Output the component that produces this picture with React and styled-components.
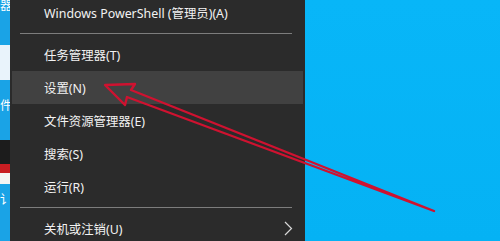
import styled, { createGlobalStyle } from "styled-components";

const GlobalStyle = createGlobalStyle`
  html, body {
    margin: 0;
    padding: 0;
    background: #06b4f6;
  }
  body {
    font-family: "Noto Sans", "Noto Sans CJK SC", sans-serif;
  }
`;

const items = [
  { label: "Windows PowerShell (管理员)(A)" },
  { sep: true },
  { label: "任务管理器(T)" },
  { label: "设置(N)", active: true },
  { label: "文件资源管理器(E)" },
  { label: "搜索(S)" },
  { label: "运行(R)" },
  { sep: true },
  { label: "关机或注销(U)", sub: true },
];

export default function App() {
  return (
    <>
      <GlobalStyle />
      <Screen>
        <DesktopStrip>
          <IconLabel>器</IconLabel>
          <IconArt $tone="#e9f3fb" $top={33} $h={35} $bottom={20} />
          <IconLabel>件</IconLabel>
          <IconArt $tone="#c81d22" $top={28} $h={44} $bottom={10} $dark />
          <IconLabel>待讠</IconLabel>
        </DesktopStrip>
        <Menu>
          {items.map((it, i) =>
            it.sep ? (
              <Separator key={i} />
            ) : (
              <Row key={i} $active={it.active}>
                <span>{it.label}</span>
                {it.sub && (
                  <svg width="9" height="15" viewBox="0 0 9 15">
                    <path d="M1 1 L7.5 7.5 L1 14" fill="none" stroke="#d8d8d8" strokeWidth="1.2" />
                  </svg>
                )}
              </Row>
            )
          )}
        </Menu>
        <Desktop />
        <Arrow width="500" height="241" viewBox="0 0 500 241">
          <path
            d="M105 85 L135 84 L131 90 L434 211 L127 97 L125 105 Z"
            fill="none"
            stroke="#cf1230"
            strokeWidth="2.4"
            strokeLinejoin="round"
          />
        </Arrow>
      </Screen>
    </>
  );
}

const Screen = styled.div`
  position: relative;
  width: 500px;
  height: 241px;
  overflow: hidden;
  display: flex;
`;

const DesktopStrip = styled.div`
  width: 10px;
  flex-shrink: 0;
  background: #1aa3e6;
  display: flex;
  flex-direction: column;
  align-items: flex-end;
  overflow: hidden;
`;

const IconLabel = styled.div`
  color: #fff;
  font-size: 12px;
  line-height: 12px;
  white-space: nowrap;
  margin-right: -2px;
`;

const IconArt = styled.div`
  width: 26px;
  height: ${(p) => p.$h}px;
  flex-shrink: 0;
  margin: ${(p) => p.$top}px -2px ${(p) => p.$bottom}px 0;
  border-radius: 40% 10% 10% 40%;
  background: ${(p) =>
    p.$dark
      ? `linear-gradient(180deg, #1c1c1c 0 55%, ${p.$tone} 55% 75%, #f4f4f4 75%)`
      : `linear-gradient(90deg, #6fa6dc 0 40%, ${p.$tone} 40%)`};
`;

const Menu = styled.div`
  width: 295px;
  flex-shrink: 0;
  background: #2b2b2b;
  margin-top: -4px;
  padding: 0 2px;
  box-sizing: border-box;
  align-self: flex-start;
  height: 260px;
`;

const Row = styled.div`
  height: 33px;
  display: flex;
  align-items: center;
  justify-content: space-between;
  padding: 0 10px 0 32px;
  color: #f2f2f2;
  font-size: 12.4px;
  background: ${(p) => (p.$active ? "#414141" : "transparent")};
  svg {
    display: block;
  }
`;

const Separator = styled.div`
  height: 1px;
  margin: 4px 11px 4px 8px;
  background: #7d7d7d;
`;

const Desktop = styled.div`
  flex: 1;
  background: linear-gradient(180deg, #08b6f8, #05b2f4);
`;

const Arrow = styled.svg`
  position: absolute;
  left: 0;
  top: 0;
  pointer-events: none;
`;
